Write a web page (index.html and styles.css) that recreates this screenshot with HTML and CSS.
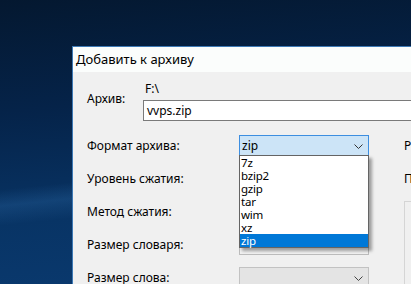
FILE: index.html
```html
<!DOCTYPE html>
<html lang="ru">
<head>
<meta charset="utf-8">
<title>Добавить к архиву</title>
<link rel="stylesheet" href="styles.css">
</head>
<body>
<div class="desktop">
  <div class="window">
    <div class="titlebar">Добавить к архиву</div>
    <div class="content">
      <div class="archive">
        <div class="archive-label">Архив:</div>
        <div class="archive-fields">
          <div class="path">F:\</div>
          <div class="input">vvps.zip</div>
        </div>
      </div>
      <div class="form">
        <div class="left">
          <div class="row">
            <div class="label">Формат архива:</div>
            <div class="combo combo-active">
              <span class="combo-text">zip</span>
              <svg class="chev" width="9" height="5" viewBox="0 0 9 5"><path d="M0.5 0.5 L4.5 4.5 L8.5 0.5" fill="none" stroke="#333" stroke-width="1"/></svg>
              <ul class="dropdown">
                <li>7z</li>
                <li>bzip2</li>
                <li>gzip</li>
                <li>tar</li>
                <li>wim</li>
                <li>xz</li>
                <li class="selected">zip</li>
              </ul>
            </div>
          </div>
          <div class="row">
            <div class="label">Уровень сжатия:</div>
            <div class="combo"></div>
          </div>
          <div class="row">
            <div class="label">Метод сжатия:</div>
            <div class="combo"></div>
          </div>
          <div class="row">
            <div class="label">Размер словаря:</div>
            <div class="combo combo-light"></div>
          </div>
          <div class="row">
            <div class="label">Размер слова:</div>
            <div class="combo combo-disabled">
              <svg class="chev" width="9" height="5" viewBox="0 0 9 5"><path d="M0.5 0.5 L4.5 4.5 L8.5 0.5" fill="none" stroke="#444" stroke-width="1"/></svg>
            </div>
          </div>
        </div>
        <div class="right">
          <div class="rrow">Режим изменения:</div>
          <div class="rrow">Параметры</div>
          <div class="group"></div>
        </div>
      </div>
    </div>
  </div>
</div>
</body>
</html>
```
FILE: styles.css
```css
html, body {
  margin: 0;
  padding: 0;
  width: 411px;
  height: 284px;
  overflow: hidden;
}
body {
  font-family: "Noto Sans", "Liberation Sans", sans-serif;
  font-size: 12px;
  color: #000;
}
.desktop {
  width: 411px;
  height: 284px;
  box-sizing: border-box;
  padding: 46px 0 0 72px;
  overflow: hidden;
  background:
    linear-gradient(174deg, rgba(0,0,0,0) 0%, rgba(0,0,0,0) 58%, rgba(40,100,160,0.35) 63%, rgba(0,0,0,0) 69%),
    linear-gradient(175deg, #041830 0%, #052349 35%, #083465 70%, #0a3a70 100%);
}
.window {
  width: 620px;
  height: 300px;
  border-left: 1px solid #3d79b5;
  border-top: 1px solid #3d79b5;
  background: #f0f0f0;
}
.titlebar {
  height: 25px;
  line-height: 25px;
  padding-left: 3px;
  background: #fbfdfc;
  font-size: 13px;
  white-space: nowrap;
}
.content {
  padding-left: 14px;
}
.archive {
  display: flex;
  padding-top: 9px;
}
.archive-label {
  width: 56px;
  padding-top: 10px;
  line-height: 15px;
}
.archive-fields {
  flex: 1;
}
.path {
  line-height: 15px;
  padding-left: 2px;
  margin-bottom: 4px;
}
.input {
  height: 19px;
  line-height: 19px;
  border: 1px solid #7a7a7a;
  background: #fff;
  padding-left: 3px;
}
.form {
  display: flex;
  margin-top: 8px;
}
.left {
  width: 282px;
}
.row {
  display: flex;
  align-items: center;
  height: 33px;
}
.label {
  width: 152px;
  white-space: nowrap;
}
.combo {
  position: relative;
  box-sizing: border-box;
  width: 130px;
  height: 21px;
  border: 1px solid #c8c8c8;
  background: #e8e8e8;
  display: flex;
  align-items: center;
}
.combo-active {
  background: #cce4f7;
  border-color: #3d8ee0;
}
.combo-light {
  background: #f1f1f1;
  border-color: #bcbcbc;
}
.combo-disabled {
  background: #e4e4e4;
  border-color: #c2c2c2;
}
.combo-text {
  padding-left: 2px;
  flex: 1;
}
.chev {
  position: absolute;
  right: 5px;
  top: 8px;
}
.dropdown {
  position: absolute;
  top: 19px;
  left: -1px;
  width: 130px;
  box-sizing: border-box;
  margin: 0;
  padding: 0;
  list-style: none;
  background: #fff;
  border: 1px solid #646464;
  box-shadow: 3px 3px 3px rgba(0,0,0,0.35);
  z-index: 2;
}
.dropdown li {
  height: 13px;
  line-height: 13px;
  padding-left: 1px;
  font-size: 11.5px;
  letter-spacing: -0.2px;
}
.dropdown li.selected {
  background: #0078d7;
  color: #fff;
}
.right {
  padding-left: 35px;
}
.rrow {
  height: 33px;
  line-height: 33px;
  white-space: nowrap;
}
.group {
  margin-top: 6px;
  width: 200px;
  height: 100px;
  border-left: 1px solid #d5d5d5;
  border-top: 1px solid #d5d5d5;
}
```
